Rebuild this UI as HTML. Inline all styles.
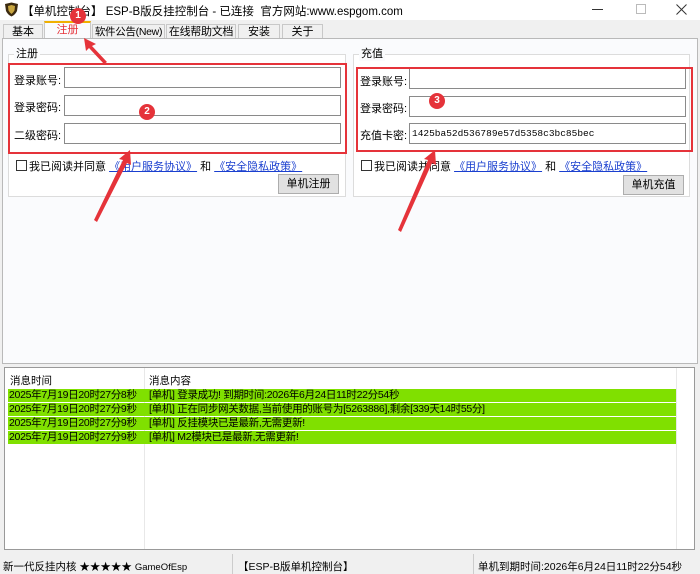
<!DOCTYPE html>
<html><head><meta charset="utf-8"><style>
*{margin:0;padding:0;box-sizing:border-box}
body{width:700px;height:574px;background:#f0f0f0;font-family:"Liberation Sans","Noto Sans CJK SC",sans-serif;font-size:11px;color:#000;position:relative;overflow:hidden}
.a{position:absolute;white-space:nowrap}
.title{left:0;top:0;width:700px;height:20px;background:#fff}
.tab{top:22px;height:16px;border:1px solid #c8c8c8;border-bottom:none;background:#f0f0f0;text-align:center;line-height:15px;font-size:11px;overflow:visible}
.page{left:2px;top:38px;width:696px;height:326px;background:#fafbfd;border:1px solid #b9b9b9}
.grp{border:1px solid #dcdcdc;background:#fff}
.inp{background:#fff;border:1px solid #8a8a8a;height:21px}
.lbl{font-size:11px}
.red{border:2px solid #e5333a}
.btn{background:#e1e1e1;border:1px solid #adadad;text-align:center;line-height:18px;font-size:11px}
.circ{width:16px;height:16px;border-radius:50%;background:#e5333a;color:#fff;font-size:10px;text-align:center;line-height:16px;font-weight:bold}
.lnk{color:#1a3fcf;text-decoration:underline}
.cb{width:11px;height:11px;border:1px solid #333;background:#fff}
.row{left:8px;width:668px;height:13px;background:#80e000;font-size:10.5px;line-height:13px}
.row span{position:absolute;top:0;letter-spacing:-0.3px}
</style></head><body>
<div class="a title"></div>
<svg class="a" style="left:4px;top:2px" width="15" height="15" viewBox="0 0 15 15"><path d="M1 2 L7.5 0.5 L14 2 L13 9 Q11 13 7.5 14.5 Q4 13 2 9Z" fill="#3b2a10"/><path d="M4 4 L7.5 3 L11 4 L10.5 8.5 Q9 11 7.5 12 Q6 11 4.5 8.5Z" fill="#c9a640"/></svg>
<div class="a" style="left:22px;top:3px;font-size:11.5px">【单机控制台】 ESP-B版反挂控制台 - 已连接 &nbsp;官方网站:www.espgom.com</div>
<div class="a" style="left:592px;top:9px;width:11px;height:1px;background:#333"></div>
<div class="a" style="left:636px;top:4px;width:10px;height:10px;border:1px solid #bbb"></div>
<svg class="a" style="left:676px;top:4px" width="11" height="11"><path d="M0.5 0.5L10.5 10.5M10.5 0.5L0.5 10.5" stroke="#333" stroke-width="1"/></svg>

<div class="a tab" style="left:3px;width:40px;top:24px">基本</div>
<div class="a tab" style="left:44px;width:47px;top:21px;height:18px;background:#fafbfd;color:#e5333a;border-top:2px solid #f0b000">注册</div>
<div class="a tab" style="left:92px;width:73px;top:24px;font-size:10.5px;letter-spacing:-0.3px">软件公告(New)</div>
<div class="a tab" style="left:166px;width:70px;top:24px;letter-spacing:-0.3px">在线帮助文档</div>
<div class="a tab" style="left:238px;width:42px;top:24px">安装</div>
<div class="a tab" style="left:282px;width:41px;top:24px">关于</div>

<div class="a page"></div>
<div class="a grp" style="left:8px;top:54px;width:338px;height:143px"></div>
<div class="a" style="left:14px;top:45px;background:#fafbfd;padding:0 2px">注册</div>
<div class="a grp" style="left:353px;top:54px;width:337px;height:143px"></div>
<div class="a" style="left:359px;top:45px;background:#fafbfd;padding:0 2px">充值</div>

<div class="a lbl" style="left:14px;top:72px">登录账号:</div>
<div class="a inp" style="left:64px;top:67px;width:277px"></div>
<div class="a lbl" style="left:14px;top:99px">登录密码:</div>
<div class="a inp" style="left:64px;top:95px;width:277px"></div>
<div class="a lbl" style="left:14px;top:127px">二级密码:</div>
<div class="a inp" style="left:64px;top:123px;width:277px"></div>
<div class="a red" style="left:8px;top:63px;width:339px;height:91px"></div>
<div class="a cb" style="left:16px;top:160px"></div>
<div class="a" style="left:29px;top:158px">我已阅读并同意 <span class="lnk">《用户服务协议》</span> 和 <span class="lnk">《安全隐私政策》</span></div>
<div class="a btn" style="left:278px;top:174px;width:61px;height:20px">单机注册</div>

<div class="a lbl" style="left:360px;top:73px">登录账号:</div>
<div class="a inp" style="left:409px;top:68px;width:277px"></div>
<div class="a lbl" style="left:360px;top:100px">登录密码:</div>
<div class="a inp" style="left:409px;top:96px;width:277px"></div>
<div class="a lbl" style="left:360px;top:127px">充值卡密:</div>
<div class="a inp" style="left:409px;top:123px;width:277px;font-family:'Liberation Mono',monospace;font-size:9.5px;line-height:19px;padding-left:2px">1425ba52d536789e57d5358c3bc85bec</div>
<div class="a red" style="left:356px;top:67px;width:337px;height:85px"></div>
<div class="a cb" style="left:361px;top:160px"></div>
<div class="a" style="left:374px;top:158px">我已阅读并同意 <span class="lnk">《用户服务协议》</span> 和 <span class="lnk">《安全隐私政策》</span></div>
<div class="a btn" style="left:623px;top:175px;width:61px;height:20px">单机充值</div>

<div class="a" style="left:4px;top:367px;width:691px;height:183px;background:#fff;border:1px solid #999"></div>
<div class="a" style="left:144px;top:368px;width:1px;height:181px;background:#e8e8e8"></div>
<div class="a" style="left:676px;top:368px;width:1px;height:181px;background:#e8e8e8"></div>
<div class="a" style="left:10px;top:373px;font-size:10.5px">消息时间</div>
<div class="a" style="left:149px;top:373px;font-size:10.5px">消息内容</div>
<div class="a row" style="top:389px"><span style="left:1px">2025年7月19日20时27分8秒</span><span style="left:141px">[单机] 登录成功! 到期时间:2026年6月24日11时22分54秒</span></div>
<div class="a row" style="top:403px"><span style="left:1px">2025年7月19日20时27分9秒</span><span style="left:141px">[单机] 正在同步网关数据,当前使用的账号为[5263886],剩余[339天14时55分]</span></div>
<div class="a row" style="top:417px"><span style="left:1px">2025年7月19日20时27分9秒</span><span style="left:141px">[单机] 反挂模块已是最新,无需更新!</span></div>
<div class="a row" style="top:431px"><span style="left:1px">2025年7月19日20时27分9秒</span><span style="left:141px">[单机] M2模块已是最新,无需更新!</span></div>

<div class="a" style="left:3px;top:559px;font-size:10.5px">新一代反挂内核 ★★★★★ <span style="font-size:9.5px">GameOfEsp</span></div>
<div class="a" style="left:238px;top:559px;font-size:10.5px">【ESP-B版单机控制台】</div>
<div class="a" style="left:478px;top:559px;font-size:10.5px">单机到期时间:2026年6月24日11时22分54秒</div>
<div class="a" style="left:232px;top:554px;width:1px;height:20px;background:#ccc"></div>
<div class="a" style="left:473px;top:554px;width:1px;height:20px;background:#ccc"></div>

<svg class="a" style="left:0;top:0" width="700" height="574">
<polygon points="84,38 96,44 92,46 107,62 104,64 89,48 86,51" fill="#e5333a"/>
<polygon points="130,150 131,165 127,163 97,222 94,220 123,160 119,159" fill="#e5333a"/>
<polygon points="435,150 436,165 432,163 401,232 398,230 428,160 424,159" fill="#e5333a"/>
</svg>
<div class="a circ" style="left:70px;top:8px">1</div>
<div class="a circ" style="left:139px;top:104px">2</div>
<div class="a circ" style="left:429px;top:93px">3</div>
</body></html>
